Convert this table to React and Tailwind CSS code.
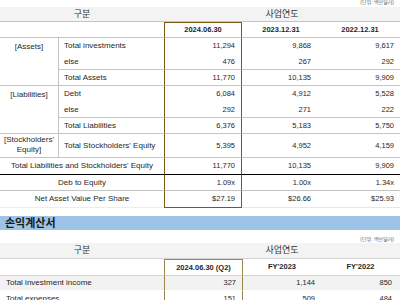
const font = { fontFamily: '"Liberation Sans", "Noto Sans CJK KR", sans-serif' };

function Num({ children, box, last, className = "" }) {
  return (
    <div
      className={`flex items-center justify-end pr-[6px] text-[7.5px] text-[#1f1f1f] ${
        box ? "border-x border-x-[#7a5a12]" : ""
      } ${last ? "border-b-[#7a5a12]" : ""} ${className}`}
    >
      {children}
    </div>
  );
}

function BalanceSheet() {
  return (
    <div className="grid grid-cols-[59px_105px_78px_78px_80px] grid-rows-[7px_15px_16px_16px_16px_16px_16px_16px_16px_24px_17px_16px_17px] text-[8px] leading-none">
      {/* unit */}
      <div className="col-span-5 flex items-start justify-end pr-[6px] text-[5px] text-[#666]">
        (단위: 백만달러)
      </div>

      {/* header 1 */}
      <div className="col-span-2 flex items-center justify-center bg-[#f3f3f3] border-b border-[#c4c4c4] text-[9px] text-[#333]">
        구분
      </div>
      <div className="col-span-3 flex items-center justify-center bg-[#f3f3f3] border-b border-[#c4c4c4] text-[9px] text-[#333]">
        사업연도
      </div>

      {/* header 2 */}
      <div className="col-span-2 border-b border-[#c4c4c4]" />
      <div className="flex items-center justify-center border-t border-x border-[#7a5a12] border-b border-b-[#c4c4c4] font-bold text-[7.5px]">
        2024.06.30
      </div>
      <div className="flex items-center justify-center border-b border-[#c4c4c4] font-bold text-[7.5px]">
        2023.12.31
      </div>
      <div className="flex items-center justify-center border-b border-[#c4c4c4] font-bold text-[7.5px]">
        2022.12.31
      </div>

      {/* Assets */}
      <div className="row-span-3 flex justify-center pt-[5px] border-r border-b border-[#c4c4c4]">[Assets]</div>
      <div className="flex items-center pl-[5px]">Total investments</div>
      <Num box>11,294</Num>
      <Num className="pr-[9px]">9,868</Num>
      <Num>9,617</Num>

      <div className="flex items-center pl-[5px] border-b border-[#c4c4c4]">else</div>
      <Num box className="border-b border-b-[#c4c4c4]">476</Num>
      <Num className="pr-[9px] border-b border-[#c4c4c4]">267</Num>
      <Num className="border-b border-[#c4c4c4]">292</Num>

      <div className="flex items-center pl-[5px] border-b border-[#c4c4c4]">Total Assets</div>
      <Num box className="border-b border-b-[#c4c4c4]">11,770</Num>
      <Num className="pr-[9px] border-b border-[#c4c4c4]">10,135</Num>
      <Num className="border-b border-[#c4c4c4]">9,909</Num>

      {/* Liabilities */}
      <div className="row-span-3 flex justify-center pt-[5px] border-r border-b border-[#c4c4c4]">[Liabilities]</div>
      <div className="flex items-center pl-[5px]">Debt</div>
      <Num box>6,084</Num>
      <Num className="pr-[9px]">4,912</Num>
      <Num>5,528</Num>

      <div className="flex items-center pl-[5px] border-b border-[#c4c4c4]">else</div>
      <Num box className="border-b border-b-[#c4c4c4]">292</Num>
      <Num className="pr-[9px] border-b border-[#c4c4c4]">271</Num>
      <Num className="border-b border-[#c4c4c4]">222</Num>

      <div className="flex items-center pl-[5px] border-b border-[#c4c4c4]">Total Liabilities</div>
      <Num box className="border-b border-b-[#c4c4c4]">6,376</Num>
      <Num className="pr-[9px] border-b border-[#c4c4c4]">5,183</Num>
      <Num className="border-b border-[#c4c4c4]">5,750</Num>

      {/* Equity */}
      <div className="flex flex-col items-center justify-center gap-[1px] border-r border-b border-[#c4c4c4] leading-[1.1]">
        <span>[Stockholders'</span>
        <span>Equity]</span>
      </div>
      <div className="flex items-center pl-[5px] border-b border-[#c4c4c4]">Total Stockholders' Equity</div>
      <Num box className="border-b border-b-[#c4c4c4]">5,395</Num>
      <Num className="pr-[9px] border-b border-[#c4c4c4]">4,952</Num>
      <Num className="border-b border-[#c4c4c4]">4,159</Num>

      <div className="col-span-2 flex items-center justify-center border-b border-black font-medium">
        Total Liabilities and Stockholders' Equity
      </div>
      <Num box className="border-b border-b-black">11,770</Num>
      <Num className="pr-[9px] border-b border-black">10,135</Num>
      <Num className="border-b border-black">9,909</Num>

      <div className="col-span-2 flex items-center justify-center border-b border-[#c4c4c4] font-medium">
        Deb to Equity
      </div>
      <Num box className="border-b border-b-[#c4c4c4]">1.09x</Num>
      <Num className="pr-[9px] border-b border-[#c4c4c4]">1.00x</Num>
      <Num className="border-b border-[#c4c4c4]">1.34x</Num>

      <div className="col-span-2 flex items-center justify-center border-b border-[#dff3f3] font-medium">
        Net Asset Value Per Share
      </div>
      <Num box className="border-b border-b-[#7a5a12]">$27.19</Num>
      <Num className="pr-[9px] border-b border-[#d2f0f0]">$26.66</Num>
      <Num className="border-b border-[#d2f0f0]">$25.93</Num>
    </div>
  );
}

function IncomeStatement() {
  return (
    <div className="grid grid-cols-[59px_105px_79px_78px_79px] grid-rows-[13px_16px_17px_15px_16px] text-[8px] leading-none">
      <div className="col-span-5 flex items-end justify-end pr-[6px] pb-[1px] text-[5px] text-[#666]">
        (단위: 백만달러)
      </div>

      <div className="col-span-2 flex items-center justify-center bg-[#f3f3f3] border-b border-[#d4d4d4] text-[9px] text-[#333]">
        구분
      </div>
      <div className="col-span-3 flex items-center justify-center bg-[#f3f3f3] border-b border-[#d4d4d4] text-[9px] text-[#333]">
        사업연도
      </div>

      <div className="col-span-2 border-b border-[#d4d4d4]" />
      <div className="flex items-center justify-center border-t border-x border-[#9c8450] border-b border-b-[#d4d4d4] font-bold text-[7.5px]">
        2024.06.30 (Q2)
      </div>
      <div className="flex items-center justify-center border-b border-[#d4d4d4] font-bold text-[7.5px]">
        FY'2023
      </div>
      <div className="flex items-center justify-center border-b border-[#d4d4d4] font-bold text-[7.5px]">
        FY'2022
      </div>

      <div className="col-span-2 flex items-center pl-[6px] bg-[#f2f2f2] border-b border-white">
        Total investment income
      </div>
      <div className="flex items-center justify-end pr-[6px] bg-[#f2f2f2] border-x border-[#9c8450] border-b border-b-white text-[7.5px]">
        327
      </div>
      <div className="flex items-center justify-end pr-[6px] bg-[#f2f2f2] border-b border-white text-[7.5px]">
        1,144
      </div>
      <div className="flex items-center justify-end pr-[8px] bg-[#f2f2f2] border-b border-white text-[7.5px]">
        850
      </div>

      <div className="col-span-2 flex items-center pl-[6px]">Total expenses</div>
      <div className="flex items-center justify-end pr-[6px] border-x border-[#9c8450] text-[7.5px]">151</div>
      <div className="flex items-center justify-end pr-[6px] text-[7.5px]">509</div>
      <div className="flex items-center justify-end pr-[8px] text-[7.5px]">484</div>
    </div>
  );
}

export default function App() {
  return (
    <div className="w-[400px] h-[300px] overflow-hidden bg-white text-[#1f1f1f]" style={font}>
      <BalanceSheet />
      <div className="h-[8px]" />
      <div className="h-[14px] bg-[#9dc3e6] flex items-center pl-[5px] text-[11px] font-bold text-[#1a1a1a] leading-none">
        손익계산서
      </div>
      <IncomeStatement />
    </div>
  );
}
